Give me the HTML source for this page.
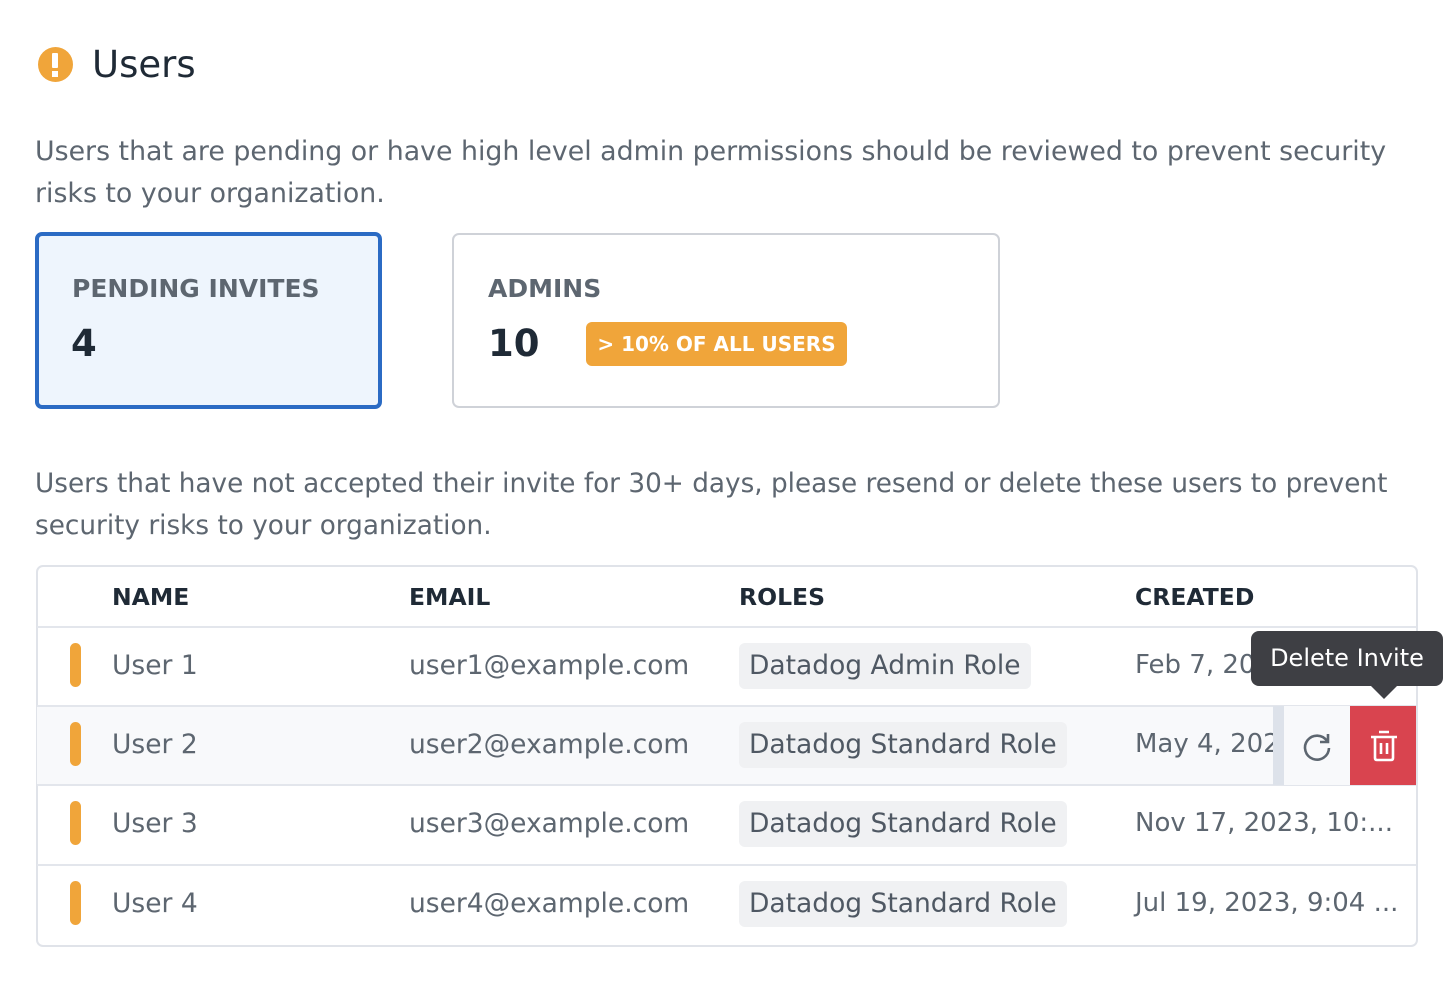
<!DOCTYPE html>
<html><head><meta charset="utf-8"><style>
*{margin:0;padding:0;box-sizing:border-box}
body{width:1454px;height:986px;background:#fff;font-family:"DejaVu Sans","Liberation Sans",sans-serif;color:#5d6670;position:relative;overflow:hidden}
.a{position:absolute;white-space:nowrap}
.p{font-size:26.8px;line-height:42px;color:#5d6670}
.hd{font-size:23.5px;font-weight:bold;color:#1f2a36}
.cell{font-size:26.5px;color:#5d6670}
.dt{font-size:26px}
.bar{position:absolute;left:70px;width:11px;height:44px;border-radius:6px;background:#f0a53a}
.chip{position:absolute;left:739px;height:46px;background:#f0f1f3;border-radius:6px;font-size:26.5px;color:#4f5863;padding:0 10px;line-height:46px}
.line{position:absolute;left:37px;width:1379px;height:2px;background:#e3e6ec}
</style></head><body>
<div class="a" style="left:38px;top:47px;width:35px;height:35px;border-radius:50%;background:#f0a53a"></div>
<div class="a" style="left:52px;top:53px;width:6px;height:15px;background:#fff;border-radius:1px"></div>
<div class="a" style="left:52px;top:71px;width:6px;height:6px;background:#fff"></div>
<div class="a" style="left:92px;top:39px;font-size:37px;color:#1f2a36;line-height:52px">Users</div>
<div class="a p" style="left:35px;top:131px">Users that are pending or have high level admin permissions should be reviewed to prevent security<br>risks to your organization.</div>
<div class="a" style="left:35px;top:232px;width:347px;height:177px;border:4px solid #2b6bc4;border-radius:7px;background:#eef5fd"></div>
<div class="a" style="left:72px;top:274px;font-size:25px;font-weight:bold;color:#5d6670">PENDING INVITES</div>
<div class="a" style="left:71px;top:322px;font-size:37px;font-weight:bold;color:#1f2a36">4</div>
<div class="a" style="left:452px;top:233px;width:548px;height:175px;border:2px solid #cfd2d8;border-radius:7px"></div>
<div class="a" style="left:488px;top:274px;font-size:25px;font-weight:bold;color:#5d6670">ADMINS</div>
<div class="a" style="left:488px;top:322px;font-size:37px;font-weight:bold;color:#1f2a36">10</div>
<div class="a" style="left:586px;top:322px;width:261px;height:44px;background:#f0a53a;border-radius:6px;color:#fff;font-weight:bold;font-size:20px;line-height:44px;text-align:center">&gt; 10% OF ALL USERS</div>
<div class="a p" style="left:35px;top:463px;font-size:26.3px">Users that have not accepted their invite for 30+ days, please resend or delete these users to prevent<br>security risks to your organization.</div>
<div class="a" style="left:36px;top:565px;width:1382px;height:382px;border:2px solid #e0e3e9;border-radius:7px"></div>
<div class="a" style="left:37px;top:706px;width:1379px;height:79px;background:#f8f9fb"></div>
<div class="line" style="top:626px"></div>
<div class="line" style="top:705px"></div>
<div class="line" style="top:784px"></div>
<div class="line" style="top:864px"></div>
<div class="a hd" style="left:112px;top:583px">NAME</div>
<div class="a hd" style="left:409px;top:583px">EMAIL</div>
<div class="a hd" style="left:739px;top:583px">ROLES</div>
<div class="a hd" style="left:1135px;top:583px">CREATED</div>

<div class="bar" style="top:643px"></div>
<div class="a cell" style="left:112px;top:650px">User 1</div>
<div class="a cell" style="left:409px;top:650px">user1@example.com</div>
<div class="chip" style="top:643px">Datadog Admin Role</div>
<div class="a cell dt" style="left:1135px;top:650px">Feb 7, 2024, 6:09 ...</div>

<div class="bar" style="top:722px"></div>
<div class="a cell" style="left:112px;top:729px">User 2</div>
<div class="a cell" style="left:409px;top:729px">user2@example.com</div>
<div class="chip" style="top:722px">Datadog Standard Role</div>
<div class="a cell dt" style="left:1135px;top:729px;width:138px;overflow:hidden">May 4, 2023</div>
<div class="a" style="left:1273px;top:706px;width:11px;height:79px;background:#dde2ea"></div>
<div class="a" style="left:1284px;top:706px;width:66px;height:79px;background:#f8f9fb"></div>
<svg class="a" style="left:1300px;top:729px" width="34" height="34" viewBox="0 0 34 34"><path d="M27 12 A12 12 0 1 0 29 19" fill="none" stroke="#5d6670" stroke-width="2.6"/><path d="M28 5 V13 H20" fill="none" stroke="#5d6670" stroke-width="2.6"/></svg>
<div class="a" style="left:1350px;top:706px;width:66px;height:79px;background:#d9444f"></div>
<svg class="a" style="left:1368px;top:729px" width="32" height="34" viewBox="0 0 32 34"><path d="M11 3H21M3 8H29M7 8V29Q7 31 9 31H23Q25 31 25 29V8M13 14V25M19 14V25" fill="none" stroke="#fff" stroke-width="2.6"/></svg>

<div class="bar" style="top:801px"></div>
<div class="a cell" style="left:112px;top:808px">User 3</div>
<div class="a cell" style="left:409px;top:808px">user3@example.com</div>
<div class="chip" style="top:801px">Datadog Standard Role</div>
<div class="a cell dt" style="left:1135px;top:808px">Nov 17, 2023, 10:...</div>

<div class="bar" style="top:881px"></div>
<div class="a cell" style="left:112px;top:888px">User 4</div>
<div class="a cell" style="left:409px;top:888px">user4@example.com</div>
<div class="chip" style="top:881px">Datadog Standard Role</div>
<div class="a cell dt" style="left:1135px;top:888px">Jul 19, 2023, 9:04 ...</div>

<div class="a" style="left:1251px;top:631px;width:192px;height:55px;background:#3e3f44;border-radius:8px;color:#fff;font-size:24px;line-height:55px;text-align:center">Delete Invite</div>
<div class="a" style="left:1370px;top:685px;width:0;height:0;border-left:14px solid transparent;border-right:14px solid transparent;border-top:14px solid #3e3f44"></div>
</body></html>
